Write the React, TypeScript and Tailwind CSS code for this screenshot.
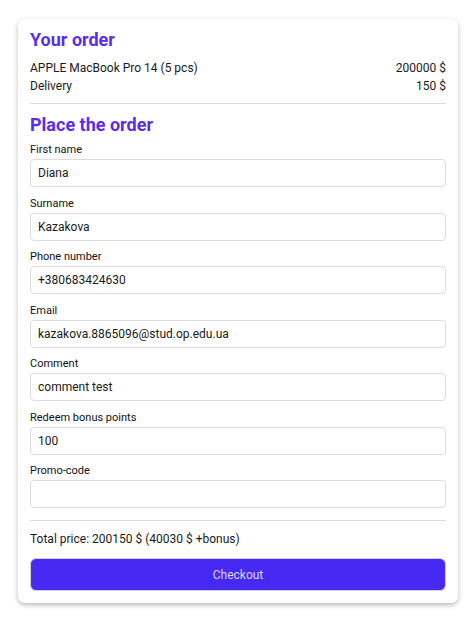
import React from "react";

const fields: { label: string; value: string }[] = [
  { label: "First name", value: "Diana" },
  { label: "Surname", value: "Kazakova" },
  { label: "Phone number", value: "+380683424630" },
  { label: "Email", value: "kazakova.8865096@stud.op.edu.ua" },
  { label: "Comment", value: "comment test" },
  { label: "Redeem bonus points", value: "100" },
  { label: "Promo-code", value: "" },
];

export default function App() {
  return (
    <div className="min-h-[631px] w-[476px] bg-white pt-[19px] font-['Roboto',sans-serif] text-[#1a1a1a]">
      <div className="mx-[18px] w-[440px] rounded-[7px] bg-white px-[12px] pt-[9px] pb-[12px] shadow-[0_2px_5px_rgba(0,0,0,0.28)]">
        <h2 className="text-[18px] leading-[24px] font-bold text-[#5a2ceb]">Your order</h2>
        <div className="mt-[7px] text-[12px] leading-[18px]">
          <div className="flex justify-between">
            <span>APPLE MacBook Pro 14 (5 pcs)</span>
            <span>200000 $</span>
          </div>
          <div className="flex justify-between">
            <span>Delivery</span>
            <span>150 $</span>
          </div>
        </div>
        <div className="mt-[8px] h-px bg-[#dcdcdc]" />
        <h2 className="mt-[9px] text-[18px] leading-[24px] font-bold text-[#5a2ceb]">Place the order</h2>
        <div className="mt-[5px] flex flex-col gap-[8.5px]">
          {fields.map((f) => (
            <div key={f.label} className="flex flex-col">
              <label className="text-[11px] leading-[16px] text-[#111]">{f.label}</label>
              <input
                readOnly
                value={f.value}
                className="mt-[1px] h-[28px] w-full rounded-[4px] border border-[#dcdcdc] bg-white px-[7px] text-[12px] text-[#1a1a1a] outline-none"
              />
            </div>
          ))}
        </div>
        <div className="mt-[12px] h-px bg-[#dcdcdc]" />
        <div className="mt-[10px] text-[12px] leading-[17px]">Total price: 200150 $ (40030 $ +bonus)</div>
        <button className="mt-[10px] flex h-[33px] w-full items-center justify-center rounded-[6px] border border-[#d0d0e0] bg-[#4629f3] text-[12px] text-[#ddd8ff]">
          Checkout
        </button>
      </div>
    </div>
  );
}
